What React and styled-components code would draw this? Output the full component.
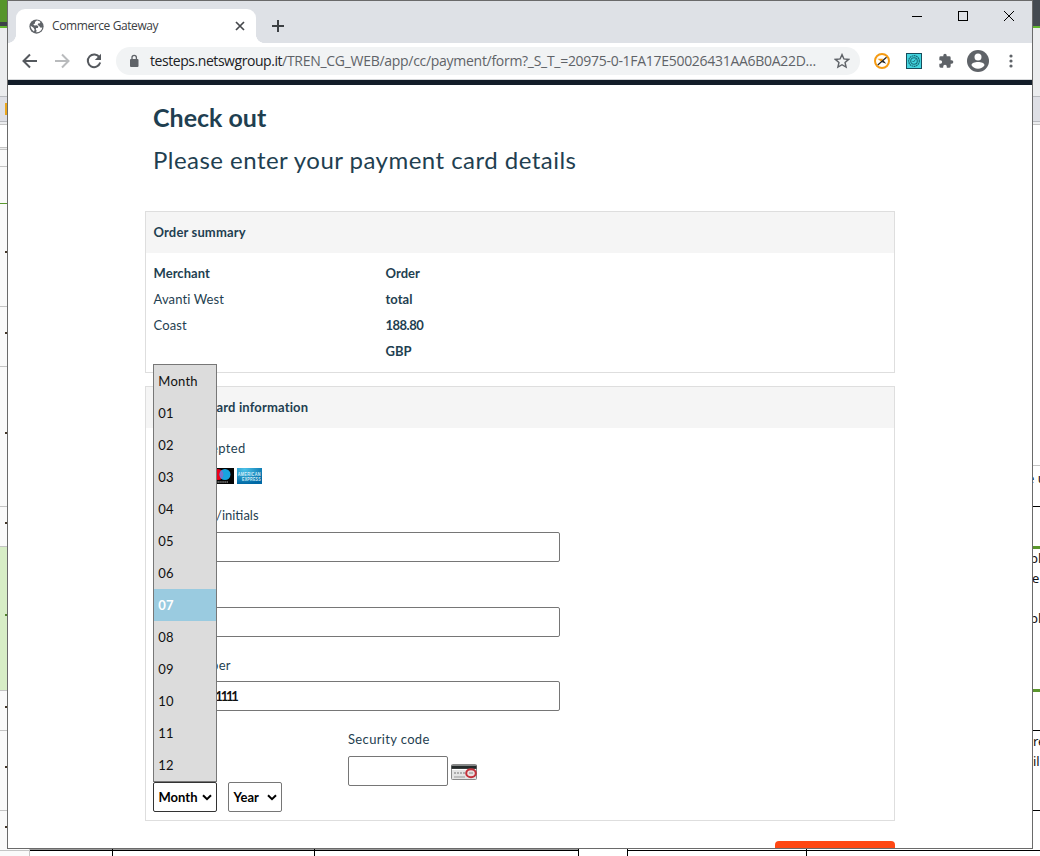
import React from "react";
import styled, { createGlobalStyle } from "styled-components";

const Global = createGlobalStyle`
  *{box-sizing:border-box}
  html,body{margin:0;padding:0;overflow:hidden;background:#fff}
`;

const face = `"Lato","Liberation Sans",sans-serif`;
const ui = `"Open Sans","Noto Sans",sans-serif`;

const Desktop = styled.div`
  width:1040px;height:856px;display:grid;
  grid-template-columns:7px 1026px 7px;grid-template-rows:849px 7px;
  overflow:hidden;background:#fff;
`;
const Strip = styled.div`display:flex;flex-direction:column;overflow:hidden;height:849px;`;
const Band = styled.div`
  flex:none;height:${p => p.$h}px;background:${p => p.$bg || "#fafafa"};
  border-bottom:${p => p.$w ?? 1}px solid ${p => p.$line || "#c4c4c4"};
  display:flex;flex-direction:column;justify-content:center;align-items:flex-end;
  padding-bottom:${p => p.$lift || 0}px;
`;
const Notes = styled(Band)`justify-content:flex-start;align-items:stretch;background:#fff;`;
const Tick = styled.i`width:2px;height:${p => p.$h || 2}px;background:${p => p.$c || "#44372a"};`;
const Peek = styled.span`
  flex:none;font:13px/20px "Noto Sans","DejaVu Sans",sans-serif;color:#111;white-space:pre;
  height:20px;margin-top:${p => p.$top || 0}px;margin-left:${p => p.$shift || 0}px;
`;
const SheetFoot = styled.div`grid-column:1 / -1;display:flex;height:7px;background:#fff;`;
const FootCell = styled.div`
  width:${p => p.$w}px;height:7px;background:${p => p.$bg || "#fff"};flex:none;
  border-right:${p => p.$last ? 0 : 1}px solid ${p => p.$line || "#000"};
`;
const FootLine = styled.div`height:2px;border-top:1px solid ${p => p.$top || "#fff"};background:${p => p.$c || "#000"};`;

const Window = styled.main`
  width:1026px;height:849px;border:1px solid #6a6a6a;background:#fff;
  display:flex;flex-direction:column;overflow:hidden;
`;
const TabStrip = styled.div`
  height:42px;background:#dee1e6;display:flex;align-items:flex-end;padding-left:8px;flex:none;
`;
const Tab = styled.div`
  position:relative;width:240px;height:34px;background:#fff;border-radius:9px 9px 0 0;display:flex;align-items:center;padding:0 11px 0 13px;
  font:12px ${ui};color:#3c4043;letter-spacing:-.4px;
  &::before,&::after{content:"";position:absolute;bottom:0;width:8px;height:8px;}
  &::before{left:-8px;background:radial-gradient(circle at 0 0,transparent 7.6px,#fff 8px)}
  &::after{right:-8px;background:radial-gradient(circle at 100% 0,transparent 7.6px,#fff 8px)}
  svg{display:block}
`;
const TabTitle = styled.span`flex:1;padding:0 0 1px 8px;white-space:nowrap;`;
const NewTab = styled.div`margin-left:16px;height:34px;display:flex;align-items:center;svg{display:block}`;
const WindowControls = styled.div`margin-left:auto;display:flex;height:41px;padding-top:4px;gap:26px;padding-right:13px;svg{display:block}`;
const Toolbar = styled.div`
  height:36px;flex:none;display:flex;align-items:center;padding:0 0 0 13px;svg{display:block;flex:none}
`;
const NavButtons = styled.div`display:flex;gap:14px;`;
const Address = styled.div`
  width:744px;height:28px;border-radius:14px;background:#f1f3f4;margin-left:13px;display:flex;align-items:center;
  padding:0 10px 0 12px;
`;
const Url = styled.span`
  flex:1;margin-left:10px;font:14px/20px ${ui};letter-spacing:-.29px;color:#5f6368;white-space:nowrap;
  b{font-weight:400;color:#202124;letter-spacing:-.44px}
`;
const Extensions = styled.div`display:flex;align-items:center;margin-left:13px;`;
const Slot = styled.span`display:flex;justify-content:center;width:${p => p.$w || 32}px;`;
const BrandBar = styled.div`height:6px;flex:none;background:#131d29;border-top:1px solid #d6d8da;`;

const Page = styled.section`
  flex:1;overflow:hidden;padding:0 137px;font-family:${face};color:#1f3f51;
`;
const Title = styled.h1`margin:17px 0 0 8px;font:700 25px/30px ${face};letter-spacing:0;`;
const Lead = styled.p`margin:12px 0 0 8px;font:400 24px/32px ${face};letter-spacing:.47px;`;
const Panel = styled.div`
  border:1px solid #dedede;margin-top:${p => p.$top}px;height:${p => p.$h}px;
`;
const PanelHead = styled.div`
  height:41px;background:#f5f5f5;padding-left:${p => p.$pad ?? 7.5}px;font:700 13px/40px ${face};letter-spacing:.15px;
`;
const Summary = styled.div`display:grid;grid-template-columns:232px 60px;padding:7px 7.5px;font:13px/26px ${face};letter-spacing:.12px;`;
const SummaryCell = styled.div`
  display:flex;flex-direction:column;
  b{letter-spacing:.05px}
`;
const Amount = styled.b`&&{letter-spacing:-.5px}`;
const Form = styled.div`padding:0 7px;font:13px/20px ${face};letter-spacing:.35px;`;
const Label = styled.div`height:20px;margin-top:${p => p.$top}px;padding-left:${p => p.$in || 0}px;letter-spacing:${p => p.$track ?? .35}px;`;
const Field = styled.div`
  width:${p => p.$w || 407}px;height:30px;border:1px solid #767676;border-radius:2px;background:#fff;
  margin-top:${p => p.$top ?? 7}px;font:700 13px/28px ${face};letter-spacing:-2.2px;color:#111;padding-left:${p => p.$in || 0}px;
`;
const Cards = styled.div`display:flex;gap:3px;padding-left:56px;margin-top:10px;svg{display:block}`;
const ExpiryRow = styled.div`display:flex;align-items:flex-start;height:101px;`;
const ExpiryCol = styled.div`width:195px;display:flex;flex-direction:column;position:relative;height:101px;`;
const Selects = styled.div`display:flex;gap:11px;margin-top:71px;`;
const Select = styled.div`
  width:${p => p.$w}px;height:30px;border:1px solid ${p => p.$open ? "#333" : "#767676"};border-radius:2px;background:#fff;color:#000;
  display:flex;align-items:center;justify-content:space-between;padding:0 4px 0 4.5px;font:700 13px ${face};letter-spacing:0;
`;
const Menu = styled.div`
  position:absolute;left:0;bottom:30px;width:64px;height:418px;background:#dcdcdc;border:1px solid #777;
  color:#111;font:13px/32px ${face};letter-spacing:.25px;
`;
const Option = styled.div`
  height:32px;padding-left:4.3px;${p => p.$on && "background:#9acbe0;color:#fff;font-weight:700;"}
`;
const Security = styled.div`display:flex;flex-direction:column;`;
const SecurityLine = styled.div`display:flex;align-items:flex-start;gap:3px;svg{display:block;margin-top:15px}`;
const Submit = styled.div`height:44px;width:120px;border-radius:4px;background:#ff4713;margin:20px 0 0 auto;`;

const Caret = () => (
  <svg width="10" height="7" viewBox="0 0 10 7"><path d="M1 1.2 5 5.2 9 1.2" fill="none" stroke="#000" strokeWidth="2" /></svg>
);
const Maestro = () => (
  <svg width="25" height="16" viewBox="0 0 25 16">
    <rect width="25" height="16" fill="#050505" /><circle cx="9" cy="6.5" r="5.5" fill="#eb001b" />
    <circle cx="16" cy="6.5" r="5.5" fill="#18a4df" /><path d="M12.5 2.3a5.5 5.5 0 0 1 0 8.400 5.500 5.500 0 0 1 0-8.400" fill="#7375cf" />
    <path d="M7 14h12" stroke="#bbb" strokeWidth="1" strokeDasharray="1.5 .6" />
  </svg>
);
const Amex = () => (
  <svg width="25" height="16" viewBox="0 0 25 16" overflow="visible">
    <defs><radialGradient id="ax" cx=".3" cy=".1" r=".9"><stop stopColor="#4cc2e8" /><stop offset="1" stopColor="#0069a5" /></radialGradient></defs>
    <rect width="25" height="16" fill="url(#ax)" />
    <g fill="#d8f0fa" fontFamily="Liberation Sans" fontWeight="700" fontSize="4.7">
      <text x=".8" y="7.9" textLength="23" lengthAdjust="spacingAndGlyphs">AMERICAN</text>
      <text x="5" y="12.8" textLength="19" lengthAdjust="spacingAndGlyphs">EXPRESS</text>
    </g>
  </svg>
);
const CardBack = () => (
  <svg width="26" height="16" viewBox="0 0 26 16">
    <rect x=".5" y=".5" width="25" height="15" rx="1" fill="#e4e4e4" stroke="#888" /><path d="M.5 3.2h25" stroke="#252b2b" strokeWidth="3.4" />
    <path d="M1 5.500h24" stroke="#fff" /><path d="M3 9h11" stroke="#777" strokeDasharray="2 1" /><path d="M3 13h11" stroke="#999" />
    <ellipse cx="20" cy="9.200" rx="4.800" ry="4" fill="#e9dfdf" stroke="#c3303a" strokeWidth="2" /><path d="M18 9h4" stroke="#888" />
  </svg>
);
const Globe = () => (
  <svg width="15" height="15" viewBox="0 0 16 16"><circle cx="8" cy="8" r="7.6" fill="#5f6368" />
    <path d="M8.300 1.700 6.400 3.200v1.600L4.600 5.500 5.800 6.900 8.500 6.700l1.500 1.200-.6 1.700H7.600l-.3 1.700.900 1.100-.700 1.800c3.400.300 6.200-1.800 6.700-5.200l-1.800.300-1.300-1.700L9.300 6.200l.4-1.500 2-.2.400-1.200C11 2.300 9.700 1.700 8.300 1.700zM1.700 7.300c.1 2.700 1.500 4.800 3.600 5.900L6 11.500 4.800 9.300z" fill="#fff" /></svg>
);
const Arrow = ({ back }) => (
  <svg width="18" height="18" viewBox="0 0 18 18"><path d={back ? "M16 9H3M9 2.500 2.500 9 9 15.500" : "M2 9h13M9 2.500 15.500 9 9 15.500"} fill="none" stroke={back ? "#55595e" : "#b9bbbd"} strokeWidth="2" /></svg>
);

const months = ["Month", "01", "02", "03", "04", "05", "06", "07", "08", "09", "10", "11", "12"];
const rowHeights = [103, 60, 140, 40];

export default function App() {
  return (
    <>
      <Global />
      <Desktop>
        <Strip>
          <Band $h={26} $bg="#56952b" $w={4} $line="#3d4248" />
          <Band $h={2} $bg="#62b62f" $w={0} />
          <Band $h={69} $bg="#ebecee" $line="#b8babf" />
          <Band $h={25} $bg="#dedfe5" $line="#b8babf"><Tick $h={12} $c="#eaa61c" /></Band>
          <Band $h={3} $bg="#ebecee" />
          <Band $h={23} $bg="#fff" />
          <Band $h={2} $bg="#eee" />
          <Band $h={17} />
          <Band $h={37} $line="#5b9a2f" />
          {rowHeights.map((h, i) => <Band key={i} $h={h} $lift={7}><Tick /></Band>)}
          <Band $h={144} $bg="#d7edc6" $lift={7}><Tick $c="#51822e" /></Band>
          <Band $h={40} $lift={7}><Tick /></Band>
          <Band $h={80} $lift={7}><Tick /></Band>
          <Band $h={38} $w={0} $lift={6}><Tick /></Band>
        </Strip>
        <Window>
          <TabStrip>
            <Tab>
              <Globe /><TabTitle>Commerce Gateway</TabTitle>
              <svg width="10" height="10" viewBox="0 0 10 10"><path d="m1 1 8 8m0-8L1 9" stroke="#45484c" strokeWidth="1.7" /></svg>
            </Tab>
            <NewTab><svg width="12" height="12" viewBox="0 0 12 12"><path d="M6 0v12M0 6h12" stroke="#3c4043" strokeWidth="2" /></svg></NewTab>
            <WindowControls>
              <svg width="20" height="20"><path d="M5 10.500h10" stroke="#000" /></svg>
              <svg width="20" height="20"><rect x="5.500" y="5.500" width="9" height="9" fill="none" stroke="#000" /></svg>
              <svg width="20" height="20"><path d="m5 5 10 10m0-10L5 15" stroke="#000" /></svg>
            </WindowControls>
          </TabStrip>
          <Toolbar>
            <NavButtons>
              <Arrow back /><Arrow />
              <svg width="18" height="18" viewBox="0 0 18 18"><path d="M14.500 5.500A6.300 6.300 0 1 0 15.200 10.500" fill="none" stroke="#55595e" strokeWidth="2" /><path d="M16 1.800V8h-6.200z" fill="#55595e" /></svg>
            </NavButtons>
            <Address>
              <svg width="12" height="14" viewBox="0 0 12 14"><rect x="2" y="5" width="8.500" height="8" rx="1" fill="#5f6368" /><path d="M4 6V3.500a2.200 2.200 0 0 1 4.400 0V6" fill="none" stroke="#5f6368" strokeWidth="1.300" /></svg>
              <Url><b>testeps.netswgroup.it</b>/TREN_CG_WEB/app/cc/payment/form?_S_T_=20975-0-1FA17E50026431AA6B0A22D...</Url>
              <svg width="16" height="16" viewBox="0 0 24 24"><path d="m12 2.500 2.900 6.400 7 .7-5.300 4.700 1.500 6.900-6.100-3.600-6.100 3.600 1.500-6.900L2.100 9.600l7-.7z" fill="none" stroke="#5f6368" strokeWidth="2.200" /></svg>
            </Address>
            <Extensions>
              <Slot $w={18}><svg width="16" height="16" viewBox="0 0 16 16"><circle cx="8" cy="8" r="7" fill="#fff" stroke="#f59b13" strokeWidth="2" /><path d="M3.500 5.800h5.500L7.600 9z" fill="#f59b13" /><path d="M3.800 12 12.500 4.200" stroke="#222" strokeWidth="1.200" /><path d="m7.500 9 2-1.500 2.800 3.300z" fill="#222" /></svg></Slot>
              <Slot $w={46}><svg width="16" height="16" viewBox="0 0 16 16"><rect x=".5" y=".5" width="15" height="15" fill="#43d5df" stroke="#174d5c" /><circle cx="8" cy="8" r="5.300" fill="none" stroke="#176b78" strokeWidth="1.200" strokeDasharray="1.700 .5" /><circle cx="8" cy="8" r="3.300" fill="none" stroke="#176b78" strokeWidth="1.100" /><path d="m6.500 8 1 1 2-2.500" fill="none" stroke="#176b78" /></svg></Slot>
              <Slot $w={18}><svg width="16" height="16" viewBox="0 0 24 24"><path d="M20.500 11H19V7a2 2 0 0 0-2-2h-4V3.500a2.500 2.500 0 0 0-5 0V5H4a2 2 0 0 0-2 2v3.800h1.500a2.700 2.700 0 0 1 0 5.400H2V20a2 2 0 0 0 2 2h3.800v-1.500a2.700 2.700 0 0 1 5.400 0V22H17a2 2 0 0 0 2-2v-4h1.500a2.500 2.500 0 0 0 0-5z" fill="#5f6368" /></svg></Slot>
              <Slot $w={46}><svg width="22" height="22" viewBox="0 0 22 22"><circle cx="11" cy="11" r="11" fill="#5f6368" /><circle cx="11" cy="6.900" r="3.500" fill="#fff" /><path d="M4.500 15.200c0-4.300 13-4.300 13 0-1.400 2.200-3.700 3.600-6.500 3.600s-5.100-1.400-6.500-3.600" fill="#fff" /></svg></Slot>
              <Slot $w={20}><svg width="4" height="14"><g fill="#5f6368"><circle cx="2" cy="2" r="1.600" /><circle cx="2" cy="7" r="1.600" /><circle cx="2" cy="12" r="1.600" /></g></svg></Slot>
            </Extensions>
          </Toolbar>
          <BrandBar />
          <Page>
            <Title>Check out</Title>
            <Lead>Please enter your payment card details</Lead>
            <Panel $top={35} $h={162}>
              <PanelHead>Order summary</PanelHead>
              <Summary>
                <SummaryCell><b>Merchant</b><span>Avanti West</span><span>Coast</span></SummaryCell>
                <SummaryCell><b>Order</b><b>total</b><Amount>188.80</Amount><b>GBP</b></SummaryCell>
              </Summary>
            </Panel>
            <Panel $top={13} $h={435}>
              <PanelHead $pad={70.5}>ard information</PanelHead>
              <Form>
                <Label $top={10} $in={58}>epted</Label>
                <Cards><Maestro /><Amex /></Cards>
                <Label $top={21} $in={63} $track={0}>/initials</Label>
                <Field />
                <Field $top={45} />
                <Label $top={18} $in={58}>ber</Label>
                <Field $top={6} $in={56}>11111</Field>
                <ExpiryRow>
                  <ExpiryCol>
                    <Selects><Select $w={64} $open>Month<Caret /></Select><Select $w={54}>Year<Caret /></Select></Selects>
                    <Menu>
                      {months.map(m => <Option key={m} $on={m === "07"}>{m}</Option>)}
                    </Menu>
                  </ExpiryCol>
                  <Security>
                    <Label $top={18}>Security code</Label>
                    <SecurityLine><Field $w={100} $top={7} /><CardBack /></SecurityLine>
                  </Security>
                </ExpiryRow>
              </Form>
            </Panel>
            <Submit />
          </Page>
        </Window>
        <Strip>
          <Band $h={26} $bg="#444a51" $w={0} />
          <Band $h={2} $bg="#62b62f" $w={0} />
          <Band $h={69} $bg="#ebecee" $line="#b8babf" />
          <Band $h={25} $bg="#dedfe5" $line="#b8babf" />
          <Band $h={3} $bg="#ebecee" />
          <Notes $h={341} />
          <Notes $h={41} $line="#000"><Peek $top={2} $shift={-6}>e u</Peek></Notes>
          <Notes $h={42} $w={3} $line="#5b962d" />
          <Notes $h={143} $w={3} $line="#5b962d">
            <Peek $top={-1} $shift={-3}>pl</Peek><Peek $shift={-1}>e</Peek><Peek $top={20} $shift={-3}>pl</Peek>
          </Notes>
          <Notes $h={39} $line="#000" />
          <Notes $h={80} $line="#000"><Peek>re</Peek><Peek>il</Peek></Notes>
          <Notes $h={38} $w={0} />
        </Strip>
        <SheetFoot>
          <FootCell $w={30} $bg="#fafafa" $line="#c4c4c4"><FootLine $c="#c4c4c4" $top="#fafafa" /></FootCell>
          <FootCell $w={83}><FootLine $top="#999" /></FootCell>
          <FootCell $w={202}><FootLine $top="#999" /></FootCell>
          <FootCell $w={264}><FootLine $top="#999" /></FootCell>
          <FootCell $w={49} />
          <FootCell $w={179}><FootLine /></FootCell>
          <FootCell $w={233} $last><FootLine /></FootCell>
        </SheetFoot>
      </Desktop>
    </>
  );
}
